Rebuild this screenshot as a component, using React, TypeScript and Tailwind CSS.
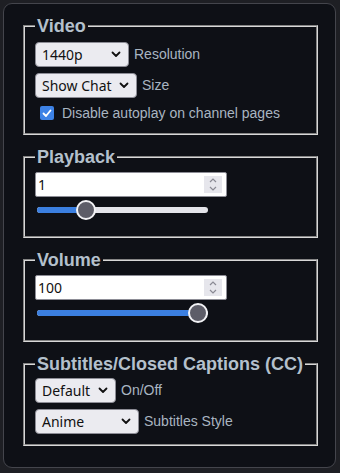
import React from "react";

const Chevron = () => (
  <svg width="10" height="7" viewBox="0 0 10 7" className="shrink-0">
    <path d="M1.5 1.5 L5 5 L8.5 1.5" fill="none" stroke="#111" strokeWidth="1.8" strokeLinecap="round" strokeLinejoin="round" />
  </svg>
);

function Select({ value, w }: { value: string; w: string }) {
  return (
    <div
      className={`${w} h-[25px] flex items-center justify-between pl-[6px] pr-[7px] rounded-[4px] bg-[#ebebf0] border border-[#8d8d96] text-[14px] text-[#111] font-['Noto_Sans',sans-serif] leading-none`}
    >
      <span>{value}</span>
      <Chevron />
    </div>
  );
}

function NumberInput({ value }: { value: string }) {
  return (
    <div className="relative w-[192px] h-[25px] bg-white border border-[#8d8d96] rounded-[2px] flex items-center pl-[2px] text-[14px] text-[#111] font-['Noto_Sans',sans-serif]">
      <span>{value}</span>
      <div className="absolute right-[4px] top-[3px] w-[18px] h-[17px] bg-[#e6e6ec] flex flex-col items-center justify-center gap-[3px]">
        <svg width="8" height="5" viewBox="0 0 8 5">
          <path d="M1 4 L4 1 L7 4" fill="none" stroke="#8a8a94" strokeWidth="1.2" />
        </svg>
        <svg width="8" height="5" viewBox="0 0 8 5">
          <path d="M1 1 L4 4 L7 1" fill="none" stroke="#8a8a94" strokeWidth="1.2" />
        </svg>
      </div>
    </div>
  );
}

function Slider({ pct }: { pct: number }) {
  const center = 10 + (171 - 20) * pct;
  return (
    <div className="relative w-[171px] h-[22px] ml-[2px] mt-[2px] flex items-center">
      <div className="w-full h-[6px] rounded-full bg-[#e4e4ea] overflow-hidden">
        <div className="h-full bg-[#3b7fe0]" style={{ width: `${center}px` }} />
      </div>
      <div
        className="absolute top-[1px] w-[20px] h-[20px] rounded-full bg-[#5d5d68] border-2 border-[#f2f2f5]"
        style={{ left: `${center - 10}px` }}
      />
    </div>
  );
}

function Fieldset({ title, children, pb, pt }: { title: string; children: React.ReactNode; pb: string; pt: string }) {
  return (
    <fieldset className={`border-2 [border-style:groove] border-[#d8d8d8] pl-[10px] pr-[10px] ${pt} ${pb}`}>
      <legend className="px-[2px] text-[18px] leading-[20px] font-bold text-[#b4c0cc] font-['Liberation_Sans',Arial,sans-serif]">
        {title}
      </legend>
      {children}
    </fieldset>
  );
}

export default function App() {
  return (
    <div className="w-[340px] h-[473px] bg-[#1e1f24] pt-[3px] pl-[3px] font-['Liberation_Sans',Arial,sans-serif]">
      <div className="w-[333px] h-[465px] bg-[#0e1016] border border-[#44454c] rounded-[9px] pl-[19px] pr-[17px] pt-[12px] flex flex-col gap-[12px]">
        <Fieldset title="Video" pt="pt-[6px]" pb="pb-[10px]">
          <div className="flex flex-col gap-[6px]">
            <div className="flex items-center gap-[5px]">
              <Select value="1440p" w="w-[94px]" />
              <span className="text-[14px] text-[#a9b5c1]">Resolution</span>
            </div>
            <div className="flex items-center gap-[5px]">
              <Select value="Show Chat" w="w-[102px]" />
              <span className="text-[14px] text-[#a9b5c1]">Size</span>
            </div>
            <div className="flex items-center gap-[8px] pl-[5px] h-[20px] -mt-[1px]">
              <div className="w-[14px] h-[14px] rounded-[2px] bg-[#3d82e6] flex items-center justify-center">
                <svg width="10" height="9" viewBox="0 0 10 9">
                  <path d="M1.5 4.5 L4 7 L8.5 1.5" fill="none" stroke="white" strokeWidth="1.8" strokeLinecap="round" strokeLinejoin="round" />
                </svg>
              </div>
              <span className="text-[14px] text-[#a9b5c1]">Disable autoplay on channel pages</span>
            </div>
          </div>
        </Fieldset>
        <Fieldset title="Playback" pt="pt-[5px]" pb="pb-[15px]">
          <NumberInput value="1" />
          <Slider pct={0.26} />
        </Fieldset>
        <Fieldset title="Volume" pt="pt-[5px]" pb="pb-[16px]">
          <NumberInput value="100" />
          <Slider pct={1} />
        </Fieldset>
        <Fieldset title="Subtitles/Closed Captions (CC)" pt="pt-[4px]" pb="pb-[10px]">
          <div className="flex flex-col gap-[6px]">
            <div className="flex items-center gap-[5px]">
              <Select value="Default" w="w-[81px]" />
              <span className="text-[14px] text-[#a9b5c1]">On/Off</span>
            </div>
            <div className="flex items-center gap-[5px]">
              <Select value="Anime" w="w-[104px]" />
              <span className="text-[14px] text-[#a9b5c1]">Subtitles Style</span>
            </div>
          </div>
        </Fieldset>
      </div>
    </div>
  );
}
